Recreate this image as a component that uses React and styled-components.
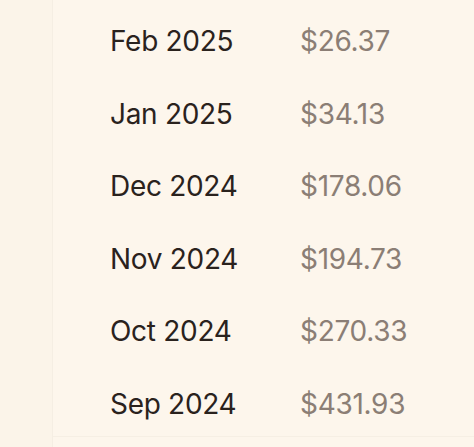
import styled, { createGlobalStyle } from "styled-components";

const GlobalStyle = createGlobalStyle`
	body {
		margin: 0;
		background: #fdf6ec;
		font-family: Inter, "Noto Sans", sans-serif;
	}
`;

const months = [
	{ month: "Feb 2025", amount: "$26.37" },
	{ month: "Jan 2025", amount: "$34.13" },
	{ month: "Dec 2024", amount: "$178.06" },
	{ month: "Nov 2024", amount: "$194.73" },
	{ month: "Oct 2024", amount: "$270.33" },
	{ month: "Sep 2024", amount: "$431.93" },
];

export default function App() {
	return (
		<>
			<GlobalStyle />
			<Page>
				<Sidebar />
				<Panel>
					<Table>
						{months.map((m) => (
							<Row key={m.month}>
								<Month>{m.month}</Month>
								<Amount>{m.amount}</Amount>
							</Row>
						))}
					</Table>
				</Panel>
			</Page>
		</>
	);
}

const Page = styled.div`
	display: flex;
	width: 474px;
	height: 447px;
	overflow: hidden;
`;

const Sidebar = styled.div`
	width: 52px;
	flex-shrink: 0;
	background: #fbf4e9;
	border-right: 1px solid #f5eee3;
`;

const Panel = styled.div`
	flex: 1;
	height: 437px;
	border-bottom: 1px solid #f6efe4;
	padding: 19px 0 0 57px;
	box-sizing: border-box;
`;

const Table = styled.div`
	display: flex;
	flex-direction: column;
`;

const Row = styled.div`
	display: grid;
	grid-template-columns: 190px auto;
	height: 72.6px;
	align-items: start;
	font-size: 28px;
	line-height: 44px;
	letter-spacing: -0.3px;
`;

const Month = styled.span`
	color: #2a221d;
`;

const Amount = styled.span`
	color: #8b7e75;
`;
